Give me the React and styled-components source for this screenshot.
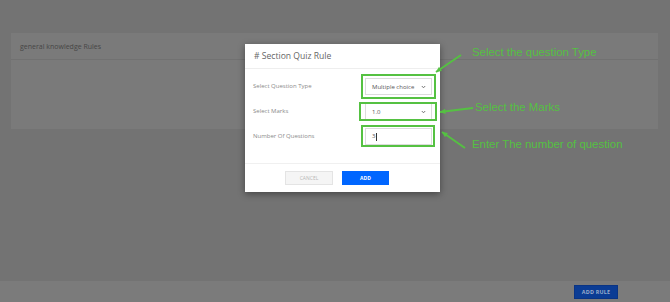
import React from 'react';
import styled, { createGlobalStyle } from 'styled-components';

const GREEN = '#55c142';

const Global = createGlobalStyle`
  html, body { margin: 0; padding: 0; }
  body {
    width: 670px;
    height: 302px;
    overflow: hidden;
    background: #737373;
    font-family: "Open Sans", "Liberation Sans", sans-serif;
  }
  * { box-sizing: border-box; }
`;

const Page = styled.div`
  position: relative;
  width: 670px;
  height: 302px;
  display: flex;
  flex-direction: column;
`;

const Content = styled.main`
  flex: 1;
  padding: 33px 12px 0 11px;
`;

const Card = styled.section`
  background: #7a7a7a;
  height: 96px;
`;

const CardHeader = styled.div`
  height: 27px;
  padding: 0 9px;
  display: flex;
  align-items: center;
  border-bottom: 1px solid #717171;
  font-size: 7px;
  color: #464646;
`;

const BottomBar = styled.footer`
  height: 21px;
  background: #7b7b7b;
  display: flex;
  justify-content: flex-end;
  align-items: center;
  padding-right: 52px;
`;

const AddRuleButton = styled.button`
  width: 44px;
  height: 14px;
  padding: 0;
  background: #0b3c94;
  border: 1px solid #0a3484;
  color: #9aabcb;
  font-family: "Open Sans", sans-serif;
  font-size: 5.4px;
  font-weight: 700;
  letter-spacing: 0.2px;
`;

const Modal = styled.div`
  position: absolute;
  left: 245px;
  top: 44px;
  width: 195px;
  background: #fff;
  box-shadow: 0 2px 7px rgba(0, 0, 0, 0.4);
`;

const ModalHeader = styled.div`
  height: 25px;
  padding: 0 9px;
  display: flex;
  align-items: center;
  border-bottom: 1px solid #eeeeee;
  font-size: 8.6px;
  color: #666;
`;

const ModalBody = styled.div`
  padding: 9px 8px 18px 8px;
  display: flex;
  flex-direction: column;
  gap: 8px;
`;

const Row = styled.div`
  height: 17px;
  display: flex;
  align-items: center;
  justify-content: space-between;
`;

const Label = styled.span`
  font-size: 6px;
  color: #8a8a8a;
  margin-top: -2px;
`;

const Control = styled.div`
  width: 67px;
  height: 17px;
  border: 1px solid #dcdcdc;
  padding: 0 5px 0 6px;
  display: flex;
  align-items: center;
  justify-content: space-between;
  font-size: 6px;
  color: #555;
`;

const Caret = styled.span`
  display: inline-block;
  width: 1px;
  height: 8px;
  background: #333;
  margin-left: 0.5px;
  vertical-align: middle;
`;

const ModalFooter = styled.div`
  height: 29px;
  border-top: 1px solid #f0f0f0;
  display: flex;
  justify-content: center;
  align-items: center;
  gap: 9px;
  padding-right: 11px;
`;

const FooterButton = styled.button`
  width: ${(p) => (p.$primary ? 47 : 48)}px;
  height: 14px;
  padding: 0;
  font-family: "Open Sans", sans-serif;
  font-size: 5px;
  font-weight: ${(p) => (p.$primary ? 700 : 400)};
  background: ${(p) => (p.$primary ? '#0066ff' : '#f5f5f5')};
  border: 1px solid ${(p) => (p.$primary ? '#0066ff' : '#e4e4e4')};
  color: ${(p) => (p.$primary ? '#fff' : '#b8b8b8')};
`;

const AnnotationLayer = styled.div`
  position: absolute;
  inset: 0;
  pointer-events: none;
`;

const AnnotBox = styled.div`
  position: absolute;
  border: 2px solid ${GREEN};
`;

const AnnotText = styled.span`
  position: absolute;
  font-family: "Liberation Sans", Arial, sans-serif;
  font-size: 11.4px;
  line-height: 1;
  color: ${GREEN};
  white-space: nowrap;
`;

const ArrowSvg = styled.svg`
  position: absolute;
  left: 0;
  top: 0;
`;

const Chevron = () => (
  <svg width="5" height="4" viewBox="0 0 5 4">
    <path d="M0.8 1 L2.5 2.8 L4.2 1" fill="none" stroke="#666" strokeWidth="0.9" />
  </svg>
);

function Arrow({ x1, y1, x2, y2 }) {
  const ang = Math.atan2(y2 - y1, x2 - x1);
  const len = 6;
  const spread = 0.45;
  const ax = x2 - len * Math.cos(ang - spread);
  const ay = y2 - len * Math.sin(ang - spread);
  const bx = x2 - len * Math.cos(ang + spread);
  const by = y2 - len * Math.sin(ang + spread);
  return (
    <g>
      <line x1={x1} y1={y1} x2={x2} y2={y2} stroke={GREEN} strokeWidth="2" />
      <polygon points={`${x2},${y2} ${ax},${ay} ${bx},${by}`} fill={GREEN} />
    </g>
  );
}

export default function App() {
  return (
    <>
      <Global />
      <Page>
        <Content>
          <Card>
            <CardHeader>general knowledge Rules</CardHeader>
          </Card>
        </Content>
        <BottomBar>
          <AddRuleButton>ADD RULE</AddRuleButton>
        </BottomBar>

        <Modal>
          <ModalHeader># Section Quiz Rule</ModalHeader>
          <ModalBody>
            <Row>
              <Label>Select Question Type</Label>
              <Control>
                <span>Multiple choice</span>
                <Chevron />
              </Control>
            </Row>
            <Row>
              <Label>Select Marks</Label>
              <Control>
                <span>1.0</span>
                <Chevron />
              </Control>
            </Row>
            <Row>
              <Label>Number Of Questions</Label>
              <Control>
                <span>
                  3<Caret />
                </span>
              </Control>
            </Row>
          </ModalBody>
          <ModalFooter>
            <FooterButton>CANCEL</FooterButton>
            <FooterButton $primary>ADD</FooterButton>
          </ModalFooter>
        </Modal>

        <AnnotationLayer>
          <AnnotBox style={{ left: 361, top: 74, width: 75, height: 25 }} />
          <AnnotBox style={{ left: 359, top: 102, width: 78, height: 19 }} />
          <AnnotBox style={{ left: 361, top: 125, width: 74, height: 22 }} />
          <ArrowSvg width="670" height="302">
            <Arrow x1={461} y1={55} x2={436} y2={72} />
            <Arrow x1={473} y1={108} x2={440} y2={112} />
            <Arrow x1={465} y1={148} x2={442} y2={132} />
          </ArrowSvg>
          <AnnotText style={{ left: 472, top: 47.3 }}>Select the question Type</AnnotText>
          <AnnotText style={{ left: 475, top: 102.3 }}>Select the Marks</AnnotText>
          <AnnotText style={{ left: 472, top: 139.3 }}>Enter The number of question</AnnotText>
        </AnnotationLayer>
      </Page>
    </>
  );
}
